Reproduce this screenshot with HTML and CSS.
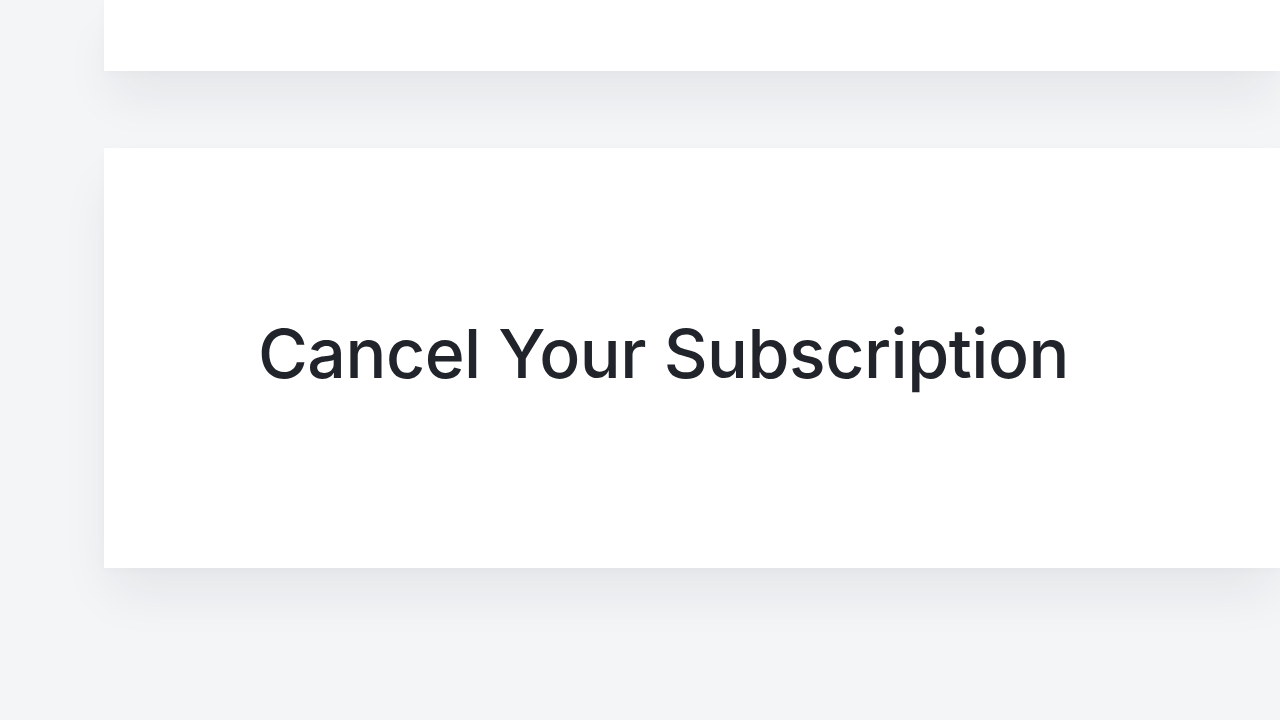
FILE: index.html
```html
<!DOCTYPE html>
<html lang="en">
<head>
    <meta charset="UTF-8">
    <meta name="viewport" content="width=device-width, initial-scale=1.0">
    <title>Cancel Your Subscription</title>
    <link rel="stylesheet" href="styles.css">
</head>
<body>

    <main class="page">
        <section class="card card-top"></section>

        <section class="card card-cancel">
            <h1 class="cancel-title">Cancel Your Subscription</h1>
        </section>
    </main>

</body>
</html>
```

FILE: styles.css
```css
* {
    margin: 0;
    padding: 0;
    box-sizing: border-box;
}

html, body {
    height: 100%;
}

body {
    font-family: Inter, "Noto Sans", Arial, sans-serif;
    background-color: #f4f5f7;
    overflow: hidden;
}

.page {
    display: flex;
    flex-direction: column;
    gap: 77px;
    padding-left: 104px;
}

.card {
    background-color: #ffffff;
    box-shadow: 0 30px 50px -6px rgba(20, 24, 40, 0.07), 0 2px 10px rgba(20, 24, 40, 0.025);
}

.card-top {
    height: 71px;
}

.card-cancel {
    height: 420px;
    display: flex;
    align-items: center;
    padding-left: 154px;
}

.cancel-title {
    font-size: 68px;
    font-weight: 550;
    color: #22242b;
    letter-spacing: -0.5px;
    line-height: 1;
    margin-top: -10px;
}
```
